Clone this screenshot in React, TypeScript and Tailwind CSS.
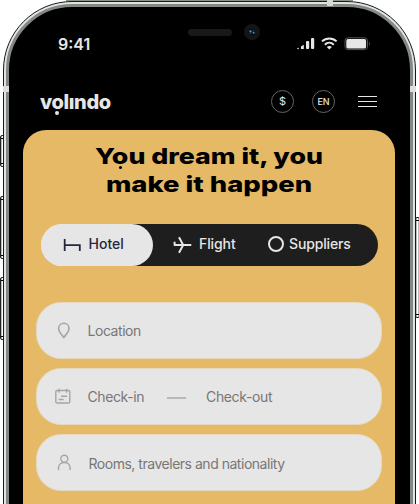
import type { ReactNode } from "react";

const sans = "font-['Inter','Liberation_Sans',sans-serif]";

function Label({ children, className = "" }: { children: ReactNode; className?: string }) {
  return <span className={`block origin-left whitespace-nowrap ${className}`}>{children}</span>;
}

function SideButton({ className }: { className: string }) {
  return (
    <div className={`absolute w-[5px] rounded-[2px] border border-[#222] bg-linear-to-r from-[#999] via-white to-[#999] ${className}`}>
      <div className="absolute inset-x-0 top-[2px] h-px bg-black" />
      <div className="absolute inset-x-0 bottom-[2px] h-px bg-black" />
    </div>
  );
}

function StatusBar() {
  return (
    <div className="flex h-[73px] items-start pl-[49px] pt-[27px] text-[#e6e6e6]">
      <Label className="h-5 w-[34px] text-[16px] font-semibold leading-[20px]">9:41</Label>
      <div className="ml-[96px] mt-[-5px] h-[7px] w-[44px] rounded-full bg-[#121212] bg-[radial-gradient(#202020_0.6px,transparent_0.8px)] bg-size-[2px_2px]" />
      <div className="ml-[12px] mt-[-10px] flex h-[16px] w-[16px] items-center justify-center rounded-full bg-[#151515]">
        <svg width="8" height="8" viewBox="0 0 8 8">
          <circle cx="4" cy="4" r="3.5" fill="#071018" />
          <path d="M1.5 2.6h2v1.6h-2zM4.8 4h1.7v1.5H4.8z" fill="#5096c0" />
          <path d="M4.6 2.9h1.7M1.8 5.2h1.8" stroke="#24516c" />
        </svg>
      </div>
      <svg className="ml-[37px] mt-[3px]" width="74" height="14" viewBox="0 0 74 14" fill="#e6e6e6">
        <circle cx="1" cy="11.5" r=".8" />
        <path d="M4 12V9.4l2.8-1.7V12z" />
        <rect x="9" y="4" width="3.2" height="8" rx="1" />
        <rect x="14" y="1" width="3.2" height="11" rx="1" />
        <g fill="none" stroke="#e6e6e6" strokeWidth="2">
          <path d="M25 4.4c4.2-4 10.4-4 14.6 0" />
          <path d="M27.8 7.7c2.6-2.5 6.4-2.5 9 0" />
        </g>
        <path d="m32.3 12.4-2.5-2.5c1.4-1.2 3.6-1.2 5 0z" />
        <rect x="48" y=".8" width="22.5" height="11.8" rx="3" fill="none" stroke="#555" />
        <rect x="49.3" y="2" width="19.8" height="9.4" rx="1.7" />
        <path d="M72 4.7q2 2 0 4z" fill="#555" />
      </svg>
    </div>
  );
}

function Header() {
  return (
    <header className="flex h-[50px] items-start pl-[31px] pt-[10px] text-[#e6e6e6]">
      <div className="relative h-[28px] w-[72px]">
        <Label className="text-[20px] font-extrabold leading-[25px] tracking-[-0.4px]">volındo</Label>
        <i className="absolute left-[15px] top-[21px] h-[4px] w-[4px] rounded-full bg-[#e6e6e6]" />
      </div>
      <div className="ml-[159px] flex h-[23px] w-[23px] items-center justify-center rounded-full border border-[#666] text-[11px]">$</div>
      <div className="ml-[18px] flex h-[23px] w-[23px] items-center justify-center rounded-full border border-[#666] text-[9px] font-medium">EN</div>
      <div className="ml-[23px] mt-[6px] flex w-[19px] flex-col gap-[4px]">
        <i className="h-px bg-[#e6e6e6]" />
        <i className="h-px bg-[#e6e6e6]" />
        <i className="h-px bg-[#e6e6e6]" />
      </div>
    </header>
  );
}

function Tabs() {
  return (
    <nav className="ml-[18px] mt-[27px] flex h-[42px] w-[337px] items-center rounded-full bg-linear-to-r from-[#e6e6e6] from-[56px] to-[#1e1e1e] to-[56px] text-[14px] font-medium text-[#e6e6e6]">
      <div className="flex h-[42px] w-[112px] items-center rounded-full bg-[#e6e6e6] text-[#25283b]">
        <svg className="ml-[22px]" width="19" height="14" viewBox="0 0 19 14" fill="none" stroke="currentColor" strokeWidth="1.8">
          <path d="M1.7 1v12M1.7 7.2h15.1V13" />
        </svg>
        <Label className="ml-[6.5px] mt-[-3px]">Hotel</Label>
      </div>
      <svg className="ml-[20px]" width="20" height="18" viewBox="0 0 20 18" fill="none" stroke="currentColor" strokeWidth="2" strokeLinejoin="round">
        <path d="M1.6 5.8V9H18.3M6 1.2 10.2 9 6 16.8" />
      </svg>
      <Label className="ml-[6px] mt-[-3px] w-[38px] tracking-[-0.1px]">Flight</Label>
      <i className="ml-[31px] mt-[-2px] h-[16px] w-[16px] rounded-full border-2 border-[#e6e6e6]" />
      <Label className="ml-[5px] mt-[-3px] tracking-[-0.15px]">Suppliers</Label>
    </nav>
  );
}

const field = "ml-[13px] flex h-[57px] w-[346px] items-center rounded-[25px] border border-[#e5d8bd] bg-[#e6e6e6] text-[14px] tracking-[-0.45px] text-[#777]";

function SearchForm() {
  return (
    <div className="mt-[36px] flex flex-col gap-[9px]">
      <div className={field}>
        <svg className="ml-[20px]" width="15" height="17" viewBox="0 0 15 17" fill="none" stroke="#a5a5a9" strokeWidth="1.6">
          <path d="M6.8 1.3c-3 0-5.2 2.2-5.2 5.1 0 3.3 3.1 6.3 5.2 9 2.1-2.7 5.2-5.7 5.2-9 0-2.9-2.2-5.1-5.2-5.1Z" />
        </svg>
        <Label className="ml-[15.5px]">Location</Label>
      </div>
      <div className={field}>
        <svg className="ml-[18px]" width="16" height="17" viewBox="0 0 16 17" fill="none" stroke="#a5a5a9" strokeWidth="1.4">
          <rect x=".8" y="2.5" width="14" height="12.5" rx="1.3" />
          <path d="M4 .8v4M11.6 .8v4M6 8.2h6M3.6 11.5h5" />
        </svg>
        <Label className="ml-[16.5px] w-[58.5px] tracking-[-0.4px]">Check-in</Label>
        <i className="ml-[21px] mt-[2px] h-[2px] w-[19px] bg-[#b8b8bb]" />
        <Label className="ml-[20px] tracking-[-0.35px]">Check-out</Label>
      </div>
      <div className={field}>
        <svg className="ml-[20px]" width="15" height="17" viewBox="0 0 15 17" fill="none" stroke="#a5a5a9" strokeWidth="1.4">
          <circle cx="7.3" cy="4.7" r="3.5" />
          <path d="M1.5 16v-2.2c0-3.1 2.4-5.3 5.8-5.3s5.8 2.2 5.8 5.3V16" />
        </svg>
        <Label className="ml-[16.5px] mt-px tracking-[-0.48px]">Rooms, travelers and nationality</Label>
      </div>
    </div>
  );
}

export default function App() {
  return (
    <div className={`relative h-[504px] w-[419px] overflow-hidden bg-white pt-px ${sans}`}>
      <i className="absolute left-[66px] right-[66px] top-0 h-px bg-[#8d928b]" />
      <SideButton className="left-0 top-[135px] h-[32px]" />
      <SideButton className="left-0 top-[196px] h-[63px]" />
      <SideButton className="left-[415px] top-[217px] h-[101px]" />
      <SideButton className="left-0 top-[277px] h-[63px]" />
      <div className="relative ml-[3px] h-[620px] w-[413px] rounded-[69px] border border-[#171917] bg-[#e1e4e0] p-[2px]">
        <div className="h-full rounded-[66px] border-[3px] border-[#858985] bg-black">
          <StatusBar />
          <Header />
          <main className="ml-[14px] h-[480px] w-[372px] overflow-hidden rounded-t-[23px] bg-[#e5b965]">
            <h1 className="relative h-[67px] pt-[13px] text-center text-[22px] font-extrabold leading-[27.5px] text-black">
              <span className="block scale-x-[1.215] whitespace-nowrap">You dream it, you</span>
              <span className="block scale-x-[1.245] whitespace-nowrap">make it happen</span>
              <i className="absolute left-[96px] top-[36px] h-[3px] w-[3px] rounded-full bg-black" />
            </h1>
            <Tabs />
            <SearchForm />
          </main>
        </div>
      </div>
      <i className="absolute left-[327px] top-0 h-[6px] w-[6px] bg-[#d8dad8]" />
      <i className="absolute left-[3px] top-[86px] h-[6px] w-[6px] bg-[#dedede]" />
      <i className="absolute left-[410px] top-[86px] h-[6px] w-[6px] bg-[#dedede]" />
    </div>
  );
}
